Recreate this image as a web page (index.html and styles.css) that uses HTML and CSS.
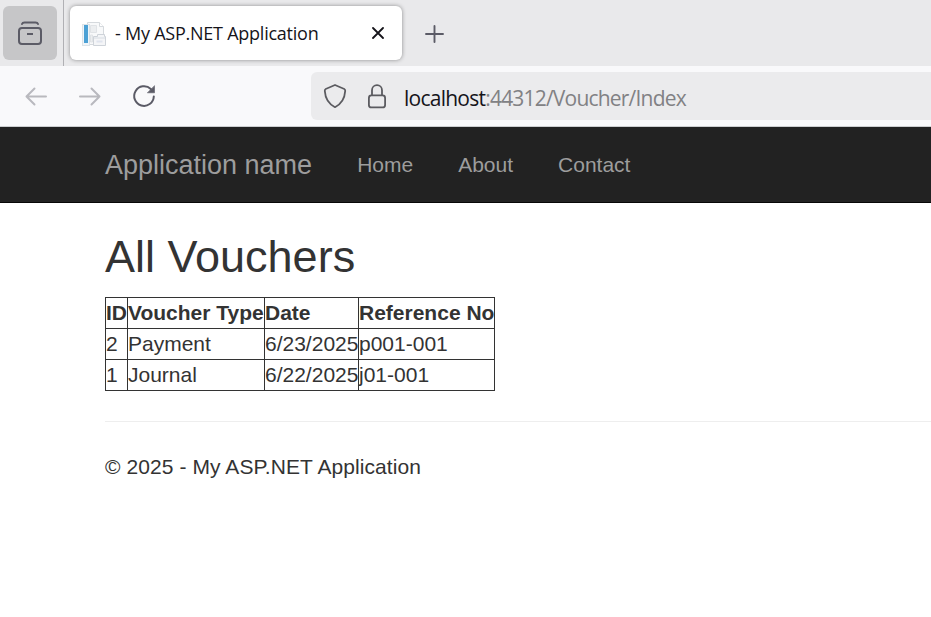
FILE: index.html
```html
<!DOCTYPE html>
<html lang="en">
<head>
<meta charset="utf-8">
<title>- My ASP.NET Application</title>
<link rel="stylesheet" href="styles.css">
</head>
<body>
<div class="tabstrip">
  <div class="view">
    <svg width="54" height="54" viewBox="3 6 54 54" fill="none" stroke="#5b5b66" stroke-width="2" stroke-linecap="round" stroke-linejoin="round">
      <path d="M22 24q.5-1.500 2.500-1.500h11q2 0 2.500 1.500"/>
      <rect x="19" y="28" width="22" height="16" rx="3"/>
      <path d="M27 34h6" stroke-linecap="butt"/>
    </svg>
  </div>
  <div class="separator"></div>
  <div class="tab">
    <svg class="favicon" width="24" height="24" viewBox="0 0 24 24">
      <path d="M5.500.5h12l4 4v18h-16z" fill="#f8f9fa" stroke="#d5d9dd"/>
      <path d="M17.500.5v4h4" fill="#fff" stroke="#d5d9dd"/>
      <path d="M8.500 3.500h6v7h-6zM8.500 13h2v7h-2z" fill="#eceef0" stroke="#e0e3e6"/>
      <rect x=".5" y="2.500" width="7" height="21" fill="#f0f5f9" stroke="#dce3e8"/>
      <rect x="2" y="3" width="4" height="18" fill="#4ca1d5"/>
      <path d="M11.500 14.500h4v-2h7v2h1v9h-12z" fill="#f4f5f7" stroke="#ced3d9"/>
      <path d="M12 16h11" stroke="#d7dce2"/>
      <rect x="14.500" y="18.500" width="6" height="2" fill="#dfe4ee"/>
    </svg>
    <span class="tab-title">- My ASP.NET Application</span>
    <svg class="close" width="12" height="12" viewBox="0 0 12 12" fill="none" stroke="#15141a" stroke-width="1.800" stroke-linecap="round"><path d="M1 1l10 10M11 1L1 11"/></svg>
  </div>
  <svg class="plus" width="18" height="18" viewBox="0 0 18 18" fill="none" stroke="#5b5b66" stroke-width="1.900" stroke-linecap="round"><path d="M9.500 1v16M1 9h17"/></svg>
</div>
<div class="toolbar">
  <svg width="311" height="60" viewBox="0 66 311 60" fill="none" stroke-width="2" stroke-linecap="round" stroke-linejoin="round">
    <g stroke="#b9b9be"><path d="M46 96.500H26.500M34.500 88.500l-8 8 8 8"/><path d="M80 96.500h19.500M91.500 88.500l8 8-8 8"/></g>
    <path d="M153.800 96.500a9.800 9.800 0 1 1-3-7.500" stroke="#5b5b66"/>
    <path d="M154.500 86v6.800h-6.800z" fill="#5b5b66" stroke="#5b5b66" stroke-width=".6"/>
  </svg>
  <div class="urlbar">
    <svg width="93" height="48" viewBox="311 72 93 48" fill="none" stroke="#5b5b60" stroke-width="1.800" stroke-linejoin="round">
      <path d="M335 85l9.300 4c.8.400 1 1 .9 2-.5 7.500-3 12.500-10.200 16.200-7.200-3.700-9.700-8.700-10.200-16.200-.1-1 .1-1.600.9-2z"/>
      <rect x="368.900" y="95.400" width="16.200" height="12" rx="2.500"/>
      <path d="M372 95v-4.800a5 5 0 0 1 10 0V95"/>
    </svg>
    <div class="url"><span class="host">localhost</span><span class="path">:44312/Voucher/Index</span></div>
  </div>
</div>
<nav class="navbar">
  <a class="brand">Application name</a>
  <a class="link">Home</a>
  <a class="link">About</a>
  <a class="link">Contact</a>
</nav>
<main class="content">
  <h2>All Vouchers</h2>
  <table>
    <colgroup><col class="c-id"><col class="c-type"><col class="c-date"><col class="c-ref"></colgroup>
    <tr><th>ID</th><th>Voucher Type</th><th>Date</th><th>Reference No</th></tr>
    <tr><td>2</td><td>Payment</td><td>6/23/2025</td><td>p001-001</td></tr>
    <tr><td>1</td><td>Journal</td><td>6/22/2025</td><td>j01-001</td></tr>
  </table>
  <hr>
  <footer>© 2025 - My ASP.NET Application</footer>
</main>
</body>
</html>
```
FILE: styles.css
```css
* { box-sizing: border-box; }
body {
  margin: 0;
  height: 617px;
  overflow: hidden;
  background: #fff;
  color: #333;
  font: 21px/30px "Liberation Sans", Arial, sans-serif;
}
svg { display: block; flex: none; }
.tabstrip {
  display: flex;
  align-items: flex-start;
  height: 66px;
  background: #e9e9eb;
}
.view {
  width: 54px;
  height: 54px;
  margin: 6px 6px 0 3px;
  border-radius: 6px;
  background: #c6c6c8;
}
.separator { width: 1px; height: 66px; background: #b0b0b4; }
.tab {
  display: flex;
  align-items: center;
  width: 332px;
  height: 54px;
  margin: 6px 0 0 6px;
  padding: 0 18px 0 12px;
  border-radius: 6px;
  background: #fff;
  box-shadow: 0 0 4px rgba(0, 0, 0, .4);
}
.tab-title {
  width: 257px;
  margin-left: 9px;
  color: #15141a;
  font: 18px/24px "Open Sans", sans-serif;
  letter-spacing: -.24px;
  white-space: nowrap;
}
.favicon { margin-top: 1px; }
.plus { margin: 25px 0 0 23px; overflow: visible; }
.toolbar {
  display: flex;
  align-items: flex-start;
  height: 61px;
  background: #f9f9fb;
  border-bottom: 1px solid #ccced0;
}
.urlbar {
  display: flex;
  align-items: center;
  flex: 1;
  height: 48px;
  margin-top: 6px;
  border-radius: 6px 0 0 6px;
  background: #ebebed;
}
.url {
  padding-top: 3px;
  font: 21px/30px "Open Sans", sans-serif;
  white-space: nowrap;
}
.host { color: #15141a; letter-spacing: -.75px; }
.path { color: #818184; letter-spacing: -.8px; }
.navbar {
  display: flex;
  height: 76px;
  padding: 23px 0 0 105px;
  gap: 45px;
  background: #222;
  border-bottom: 1px solid #080808;
  color: #9d9d9d;
}
.brand { font-size: 27px; }
.content { padding-left: 105px; }
h2 {
  margin: 29px 0 16px;
  font-size: 45px;
  line-height: 49px;
  font-weight: normal;
}
table {
  width: 390px;
  table-layout: fixed;
  border-collapse: collapse;
}
.c-id { width: 22px; }
.c-type { width: 137px; }
.c-date { width: 94px; }
.c-ref { width: 136px; }
th, td {
  height: 31px;
  padding: 0;
  border: 1px solid #333;
  text-align: left;
  white-space: nowrap;
}
hr {
  height: 1px;
  margin: 30px 0;
  border: 0;
  background: #eee;
}
footer { letter-spacing: .08px; }
```
